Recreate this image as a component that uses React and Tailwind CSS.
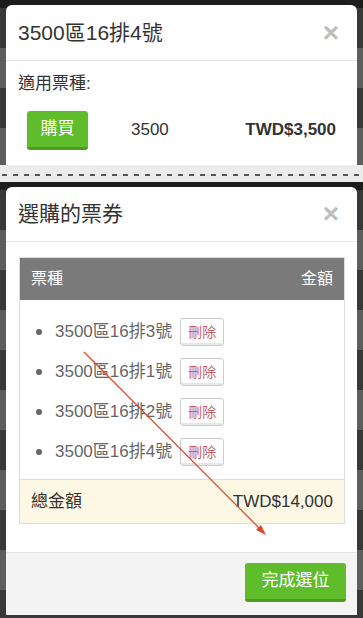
import React from 'react'

const font = { fontFamily: '"Liberation Sans", "Noto Sans CJK TC", sans-serif' }

const seats = ['3500區16排3號', '3500區16排1號', '3500區16排2號', '3500區16排4號']

function Backdrop() {
  // faint rows of the seat page behind the dark overlay
  const rows = Array.from({ length: 16 })
  return (
    <div className="absolute inset-0 flex flex-col bg-[#1c1c1c]">
      <div className="h-[8px] shrink-0" />
      {rows.map((_, i) => (
        <div key={i} className={i % 2 ? 'h-[40px] shrink-0 bg-[#5e5e5e]' : 'h-[40px] shrink-0 bg-[#383838]'} />
      ))}
    </div>
  )
}

function CloseX() {
  return <span className="text-[28px] leading-none font-bold text-[#bdbdbd]">×</span>
}

function GreenButton({ children, className }) {
  return (
    <button className={'rounded-[3px] bg-[#5fbd2b] border-b-[3px] border-[#4e9c22] text-white ' + className}>
      {children}
    </button>
  )
}

export default function App() {
  return (
    <div className="w-[363px] h-[618px] overflow-hidden bg-[#ececec] relative" style={font}>
      {/* top capture */}
      <div className="relative h-[165px] overflow-hidden">
        <Backdrop />
        <div className="relative mx-[6px] mt-[5px] h-[200px] bg-white rounded-t-[6px]">
          <div className="flex items-center justify-between h-[56px] pl-[12px] pr-[18px] border-b border-[#e5e5e5]">
            <h3 className="text-[21px] text-[#333]">3500區16排4號</h3>
            <CloseX />
          </div>
          <div className="pl-[12px] pr-[21px] pt-[10px]">
            <p className="text-[17px] text-[#333]">適用票種:</p>
            <div className="flex items-center mt-[14px]">
              <GreenButton className="ml-[9px] w-[61px] h-[39px] text-[17px]">購買</GreenButton>
              <span className="ml-[43px] text-[17px] text-[#333]">3500</span>
              <span className="ml-auto text-[17px] font-bold text-[#333]">TWD$3,500</span>
            </div>
          </div>
        </div>
      </div>

      {/* separator */}
      <div className="h-[17px] flex items-center pt-[3px]">
        <div className="w-full h-[2px] bg-[repeating-linear-gradient(90deg,#555_0_5px,transparent_5px_11px)] ml-[2px]" />
      </div>

      {/* bottom capture */}
      <div className="relative h-[436px] overflow-hidden">
        <Backdrop />
        <div className="relative mx-[6px] mt-[5px] bg-white rounded-t-[6px] h-[428px] flex flex-col">
          <div className="flex items-center justify-between h-[55px] shrink-0 pl-[12px] pr-[18px] border-b border-[#e5e5e5]">
            <h3 className="text-[21px] text-[#333]">選購的票券</h3>
            <CloseX />
          </div>
          <div className="pl-[13px] pr-[12px] pt-[15px] flex-1">
            <div className="border border-[#dddddd]">
              <div className="flex justify-between items-center h-[42px] bg-[#7a7a7a] px-[11px] text-white text-[16px]">
                <span>票種</span>
                <span>金額</span>
              </div>
              <ul className="pt-[12px] pb-[7px]">
                {seats.map(s => (
                  <li key={s} className="flex items-center h-[40px] pl-[16px]">
                    <span className="w-[6px] h-[6px] rounded-full bg-[#666] mr-[13px]" />
                    <span className="text-[17px] text-[#666]">{s}</span>
                    <button className="ml-[8px] h-[28px] px-[7px] border border-[#ccc] rounded-[3px] bg-white shadow-[inset_0_-2px_0_#e6e6e6] text-[14px] text-[#c9625f]">
                      刪除
                    </button>
                  </li>
                ))}
              </ul>
              <div className="flex justify-between items-center h-[44px] bg-[#fcf8e3] border-t border-[#dddddd] px-[11px] text-[17px] text-[#333]">
                <span>總金額</span>
                <span>TWD$14,000</span>
              </div>
            </div>
          </div>
          <div className="h-[63px] shrink-0 bg-[#f4f4f4] border-t border-[#e5e5e5] flex items-start justify-end pt-[10px] pr-[11px]">
            <GreenButton className="w-[101px] h-[39px] text-[17px]">完成選位</GreenButton>
          </div>
        </div>
      </div>

      {/* red annotation arrow */}
      <svg className="absolute left-0 top-0 pointer-events-none" width="363" height="618">
        <line x1="84" y1="352" x2="262" y2="531" stroke="#e0452a" strokeWidth="1.2" />
        <polygon points="266,535 256,530 261,525" fill="#e0452a" />
      </svg>
    </div>
  )
}
